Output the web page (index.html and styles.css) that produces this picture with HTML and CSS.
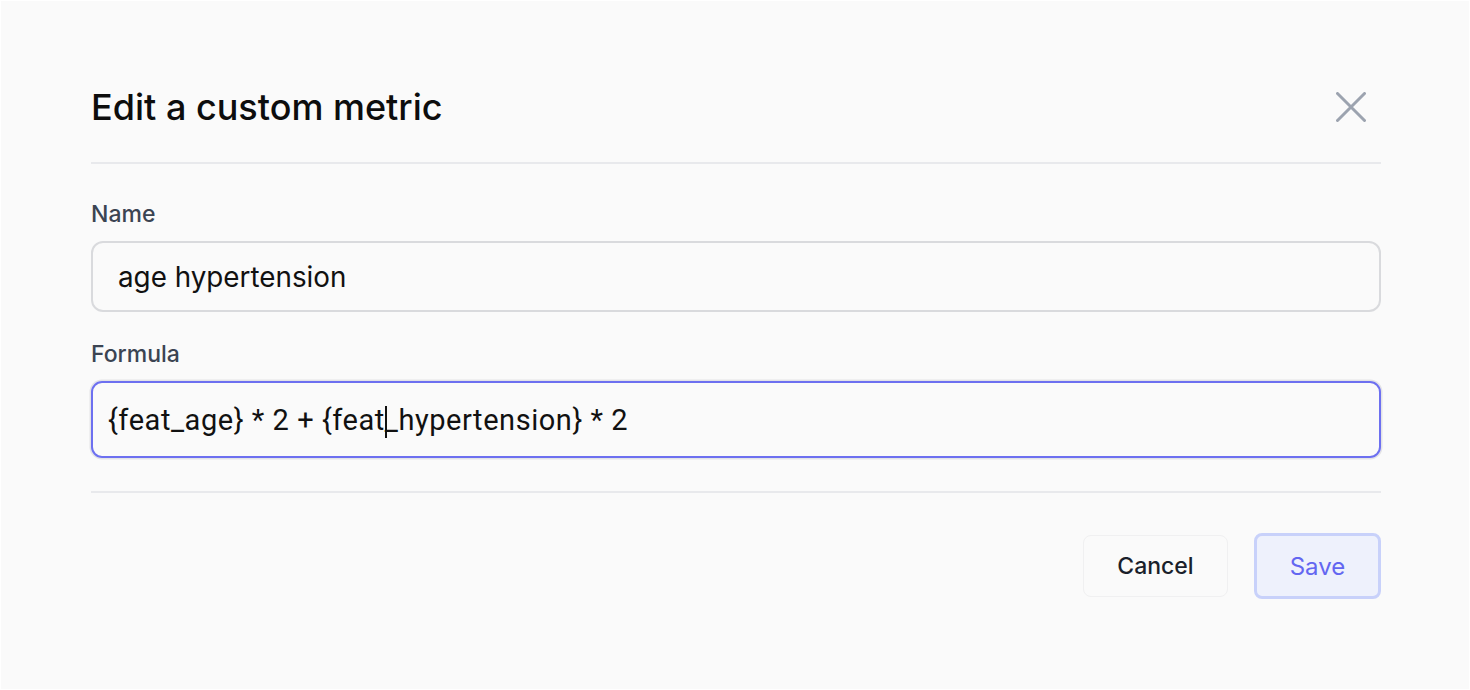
FILE: index.html
```html
<!DOCTYPE html>
<html lang="en">
<head>
<meta charset="utf-8">
<title>Edit a custom metric</title>
<link rel="stylesheet" href="styles.css">
</head>
<body>
<div class="modal">
  <header class="modal-header">
    <h1 class="modal-title">Edit a custom metric</h1>
    <button class="close-btn" aria-label="Close">
      <svg width="30" height="30" viewBox="0 0 30 30" fill="none" stroke="#9ca3af" stroke-width="3" stroke-linecap="round">
        <path d="M1.5 1.5 L28.5 28.5 M28.5 1.5 L1.5 28.5"/>
      </svg>
    </button>
  </header>
  <section class="modal-body">
    <label class="field-label">Name</label>
    <div class="text-input">age hypertension</div>
    <label class="field-label formula-label">Formula</label>
    <div class="formula-input">{feat_age} * 2 + {feat<span class="caret"></span>_hypertension} * 2</div>
  </section>
  <footer class="modal-footer">
    <button class="btn btn-cancel">Cancel</button>
    <button class="btn btn-save">Save</button>
  </footer>
</div>
</body>
</html>
```

FILE: styles.css
```css
* { box-sizing: border-box; }
html, body { margin: 0; padding: 0; background: #ffffff; }
body { font-family: Inter, "Noto Sans", sans-serif; color: #111111; }

.modal {
  margin: 1px;
  height: 688px;
  background: #fafafa;
  padding: 62px 88px 0 90px;
}

.modal-header {
  display: flex;
  align-items: center;
  justify-content: space-between;
  height: 101px;
  padding-bottom: 11px;
  border-bottom: 2px solid #e8e9ec;
}
.modal-title {
  margin: 0;
  font-size: 36px;
  font-weight: 500;
  line-height: 44px;
  color: #0d0d0d;
}
.close-btn {
  background: none;
  border: none;
  padding: 0;
  width: 30px;
  height: 30px;
  margin-right: 15px;
  display: flex;
}

.modal-body {
  display: flex;
  flex-direction: column;
  padding-top: 36px;
  padding-bottom: 33px;
  border-bottom: 2px solid #e8e9ec;
}
.field-label {
  font-size: 23px;
  line-height: 28px;
  color: #3b4452;
  font-weight: 500;
  margin-bottom: 13px;
}
.formula-label { margin-top: 28px; }

.text-input {
  height: 71px;
  border: 2px solid #d9dadd;
  border-radius: 12px;
  padding: 0 25px;
  display: flex;
  align-items: center;
  font-size: 27.8px;
  color: #111111;
}
.formula-input {
  height: 77px;
  border: 2px solid #6d70f0;
  border-radius: 11px;
  padding: 0 15px;
  display: flex;
  align-items: center;
  font-family: Roboto, "Liberation Sans", sans-serif;
  font-size: 29px;
  letter-spacing: 0.55px;
  color: #111111;
  box-shadow: 0 0 0 1.5px #e3e3e6;
}
.caret {
  display: inline-block;
  width: 2px;
  height: 32px;
  background: #111;
  margin-right: -2px;
  position: relative;
  top: 2px;
}

.modal-footer {
  display: flex;
  justify-content: flex-end;
  align-items: center;
  gap: 26px;
  padding-top: 40px;
}
.btn {
  font-family: Inter, "Noto Sans", sans-serif;
  font-size: 23px;
  font-weight: 500;
  border-radius: 8px;
  cursor: pointer;
}
.btn-cancel {
  width: 145px;
  height: 62px;
  background: #fafafa;
  border: 1.5px solid #f0f0f1;
  color: #1a1f2b;
}
.btn-save {
  width: 127px;
  height: 66px;
  background: #eef1fc;
  border: 3px solid #c8d1fa;
  color: #6366f1;
  font-size: 24px;
  font-weight: 400;
}
```
